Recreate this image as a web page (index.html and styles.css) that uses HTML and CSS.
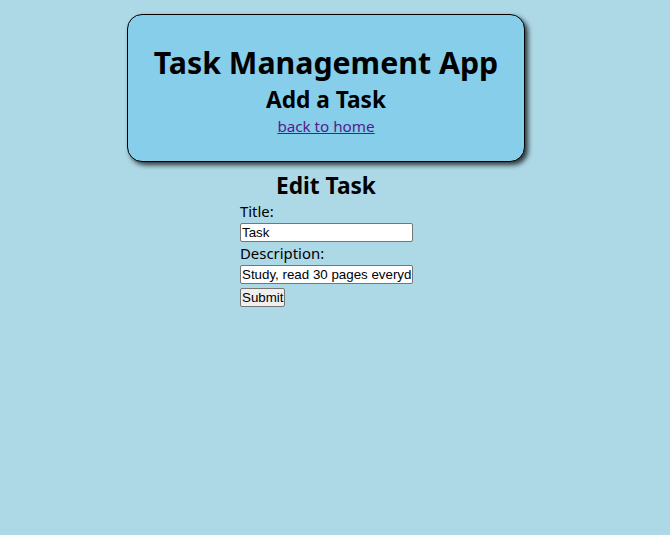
FILE: index.html
```html
<!DOCTYPE html>
<html>
<head>
<meta charset="utf-8">
<link rel="stylesheet" href="styles.css">
</head>
<body>
<div class="page">
  <header class="card">
    <h1 class="title">Task Management App</h1>
    <h2 class="subtitle">Add a Task</h2>
    <a class="home-link" href="#">back to home</a>
  </header>
  <section class="edit">
    <h2 class="edit-title">Edit Task</h2>
    <form class="form">
      <label class="label" for="title">Title:</label>
      <input class="field" id="title" type="text" value="Task">
      <label class="label" for="desc">Description:</label>
      <input class="field" id="desc" type="text" value="Study, read 30 pages everyday">
      <button class="submit" type="button">Submit</button>
    </form>
  </section>
</div>
</body>
</html>
```
FILE: styles.css
```css
html, body {
  margin: 0;
  padding: 0;
}
body {
  background: #add8e6;
  font-family: "Noto Sans", "Open Sans", sans-serif;
  color: #000;
  height: 535px;
}
.page {
  margin: 0 26px 0 8px;
  padding-top: 14px;
  display: flex;
  flex-direction: column;
  align-items: center;
}
.card {
  box-sizing: border-box;
  width: 398px;
  height: 148px;
  background: #87ceeb;
  border: 1px solid #000;
  border-radius: 15px;
  box-shadow: 3px 3px 5px rgba(0, 0, 0, 0.75);
  display: flex;
  flex-direction: column;
  align-items: center;
  padding-top: 29px;
}
.title {
  margin: 0;
  font-size: 30.3px;
  line-height: 38px;
  font-weight: 700;
}
.subtitle {
  margin: 4px 0 0;
  font-size: 22.7px;
  line-height: 28px;
  font-weight: 700;
}
.home-link {
  margin-top: 1px;
  font-size: 15.2px;
  line-height: 22px;
  color: #551a8b;
}
.edit {
  display: flex;
  flex-direction: column;
  align-items: center;
  margin-top: 10px;
}
.edit-title {
  margin: 0;
  font-size: 22.7px;
  line-height: 28px;
  font-weight: 700;
}
.form {
  display: flex;
  flex-direction: column;
  align-items: flex-start;
  width: 173px;
  padding-left: 1px;
}
.label {
  font-size: 14.9px;
  line-height: 20px;
  margin-top: 1px;
}
.field {
  box-sizing: border-box;
  width: 173px;
  height: 19px;
  margin: 2px 0 0;
  padding: 0 1px;
  border: 1px solid #767676;
  border-radius: 2px;
  background: #fff;
  font-family: "Liberation Sans", Arial, sans-serif;
  font-size: 13.33px;
  color: #000;
}
.submit {
  box-sizing: border-box;
  height: 19px;
  margin-top: 4px;
  padding: 0 1px;
  border: 1px solid #767676;
  border-radius: 2px;
  background: #efefef;
  font-family: "Liberation Sans", Arial, sans-serif;
  font-size: 13.33px;
  color: #000;
}
```
